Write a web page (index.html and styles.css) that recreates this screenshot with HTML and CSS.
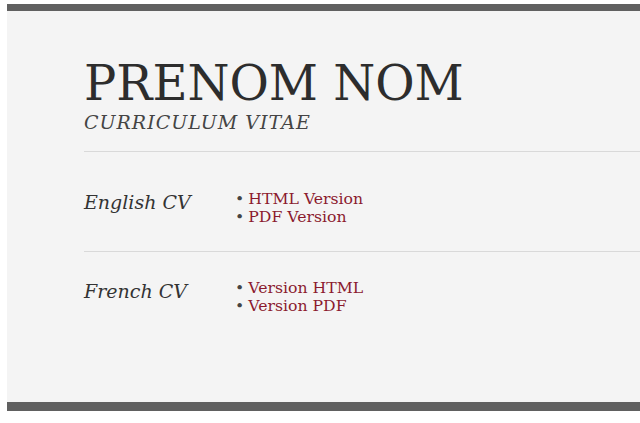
FILE: index.html
```html
<!DOCTYPE html>
<html>
<head>
<meta charset="utf-8">
<link rel="stylesheet" href="styles.css">
</head>
<body>
<div class="page">
  <header class="head">
    <h1 class="name">PRENOM NOM</h1>
    <p class="sub">CURRICULUM VITAE</p>
  </header>
  <section class="row">
    <h2 class="label">English CV</h2>
    <ul class="links">
      <li><a href="#">HTML Version</a></li>
      <li><a href="#">PDF Version</a></li>
    </ul>
  </section>
  <section class="row">
    <h2 class="label">French CV</h2>
    <ul class="links">
      <li><a href="#">Version HTML</a></li>
      <li><a href="#">Version PDF</a></li>
    </ul>
  </section>
</div>
</body>
</html>
```
FILE: styles.css
```css
html, body { margin: 0; padding: 0; background: #fff; }
body { padding: 4px 0 0 7px; font-family: "DejaVu Serif", serif; color: #333; }
.page {
  background: #f4f4f4;
  border-top: 7px solid #606060;
  border-bottom: 9px solid #606060;
  height: 391px;
  padding-left: 77px;
  box-sizing: content-box;
}
.head { padding-top: 44px; padding-bottom: 18px; margin-bottom: 11px; border-bottom: 1px solid #d9d9d9; }
.name { margin: 0; font-weight: normal; font-size: 48px; line-height: 56px; color: #2d2d2d; }
.sub { margin: 0; font-style: italic; font-size: 19px; line-height: 22px; color: #444; letter-spacing: 1px; }
.row { display: flex; padding: 26px 0 25px; border-bottom: 1px solid #d9d9d9; }
.row:last-child { border-bottom: none; }
.label { margin: 0; width: 151px; font-weight: normal; font-style: italic; font-size: 19px; line-height: 26px; color: #333; }
.links { margin: 0; padding: 1px 0 0; list-style: none; font-size: 15.7px; line-height: 18px; }
.links li::before { content: "•"; color: #444; margin-right: 4px; }
.links a { color: #8b1a2e; text-decoration: none; }
```
